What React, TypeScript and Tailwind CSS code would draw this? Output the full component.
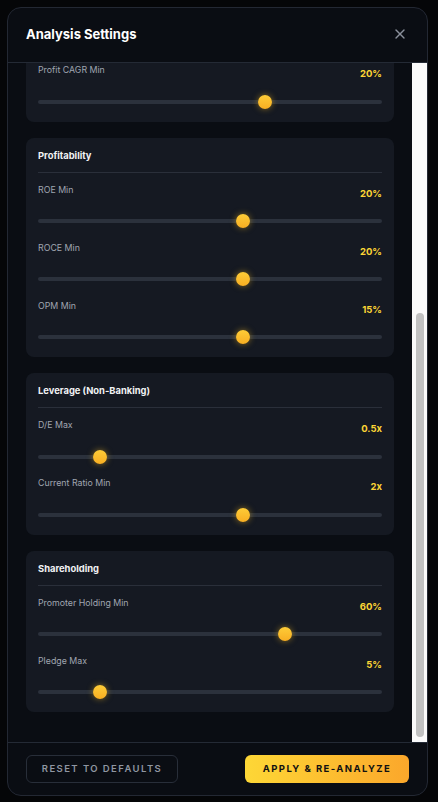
import { useLayoutEffect, useRef } from "react";
import { X } from "lucide-react";

type SliderDef = { label: string; value: string; pct: number };
type Section = { title: string; sliders: SliderDef[] };

const sections: Section[] = [
  {
    title: "Growth",
    sliders: [
      { label: "Sales CAGR Min", value: "15%", pct: 0.5 },
      { label: "Profit CAGR Min", value: "20%", pct: 2 / 3 },
    ],
  },
  {
    title: "Profitability",
    sliders: [
      { label: "ROE Min", value: "20%", pct: 0.6 },
      { label: "ROCE Min", value: "20%", pct: 0.6 },
      { label: "OPM Min", value: "15%", pct: 0.6 },
    ],
  },
  {
    title: "Leverage (Non-Banking)",
    sliders: [
      { label: "D/E Max", value: "0.5x", pct: 1 / 6 },
      { label: "Current Ratio Min", value: "2x", pct: 0.6 },
    ],
  },
  {
    title: "Shareholding",
    sliders: [
      { label: "Promoter Holding Min", value: "60%", pct: 40 / 55 },
      { label: "Pledge Max", value: "5%", pct: 1 / 6 },
    ],
  },
];

function Slider({ label, value, pct }: SliderDef) {
  return (
    <div className="flex flex-col">
      <div className="flex items-start justify-between">
        <span className="mt-[1px] text-[8.8px] leading-[14px] text-[#a0a6b1]">{label}</span>
        <span className="mt-[5px] text-[9.5px] font-bold leading-[14px] text-[#fcd535]">{value}</span>
      </div>
      <div className="relative mt-[13.5px] flex h-[14px] items-center">
        <div className="h-[4px] w-full rounded-full bg-[#2b313c]" />
        <div
          className="absolute top-0 h-[14px] w-[14px] rounded-full bg-linear-to-b from-[#fdcc37] to-[#f8ae22] shadow-[0_0_6px_rgba(251,191,36,0.5)]"
          style={{ left: `calc(${pct} * (100% - 14px))` }}
        />
      </div>
    </div>
  );
}

function Card({ title, sliders }: Section) {
  return (
    <div className="rounded-[8px] bg-[#151922] px-[12px] pb-[13px] pt-[11px]">
      <div className="border-b border-[#2a2f3a] pb-[9px] text-[9.4px] font-bold leading-[14px] text-[#f1f2f4]">
        {title}
      </div>
      <div className="mt-[9px] flex flex-col gap-[11.5px]">
        {sliders.map((s) => (
          <Slider key={s.label} {...s} />
        ))}
      </div>
    </div>
  );
}

export default function App() {
  const ref = useRef<HTMLDivElement>(null);
  useLayoutEffect(() => {
    if (ref.current) ref.current.scrollTop = ref.current.scrollHeight;
  }, []);

  return (
    <div className="min-h-screen bg-[#050608] pl-[7px] pt-[7px] font-['Inter','Noto_Sans',sans-serif]">
      <div className="flex h-[789px] w-[421px] flex-col overflow-hidden rounded-[14px] border border-[#232833] bg-[#0a0d13]">
        <div className="flex h-[55px] shrink-0 items-center justify-between border-b border-[#242a35] pl-[18px] pr-[19px]">
          <h2 className="text-[13px] font-bold text-white">Analysis Settings</h2>
          <X size={16} strokeWidth={2} className="-mt-[2px] text-[#8a909b]" />
        </div>
        <div className="flex min-h-0 flex-1">
          <div ref={ref} className="min-h-0 flex-1 overflow-hidden px-[18px] pb-[30px]">
            <div className="flex flex-col gap-[16px]">
              {sections.map((s) => (
                <Card key={s.title} {...s} />
              ))}
            </div>
          </div>
          <div className="flex w-[15px] shrink-0 flex-col items-center justify-end bg-[#fafafa] pb-[5px]">
            <div className="h-[424px] w-[8px] rounded-full bg-[#c1c1c1]" />
          </div>
        </div>
        <div className="flex shrink-0 items-center justify-between border-t border-[#242a35] px-[18px] py-[12px]">
          <button className="flex h-[28px] w-[152px] items-center justify-center rounded-[6px] border border-[#282e39] text-[9.5px] font-semibold tracking-[0.15em] text-[#8f96a1]">
            RESET TO DEFAULTS
          </button>
          <button className="flex h-[28px] w-[164px] items-center justify-center rounded-[6px] bg-linear-to-r from-[#fdd736] to-[#fba72b] text-[9.5px] font-bold tracking-[0.15em] text-[#111111]">
            APPLY &amp; RE-ANALYZE
          </button>
        </div>
      </div>
    </div>
  );
}
